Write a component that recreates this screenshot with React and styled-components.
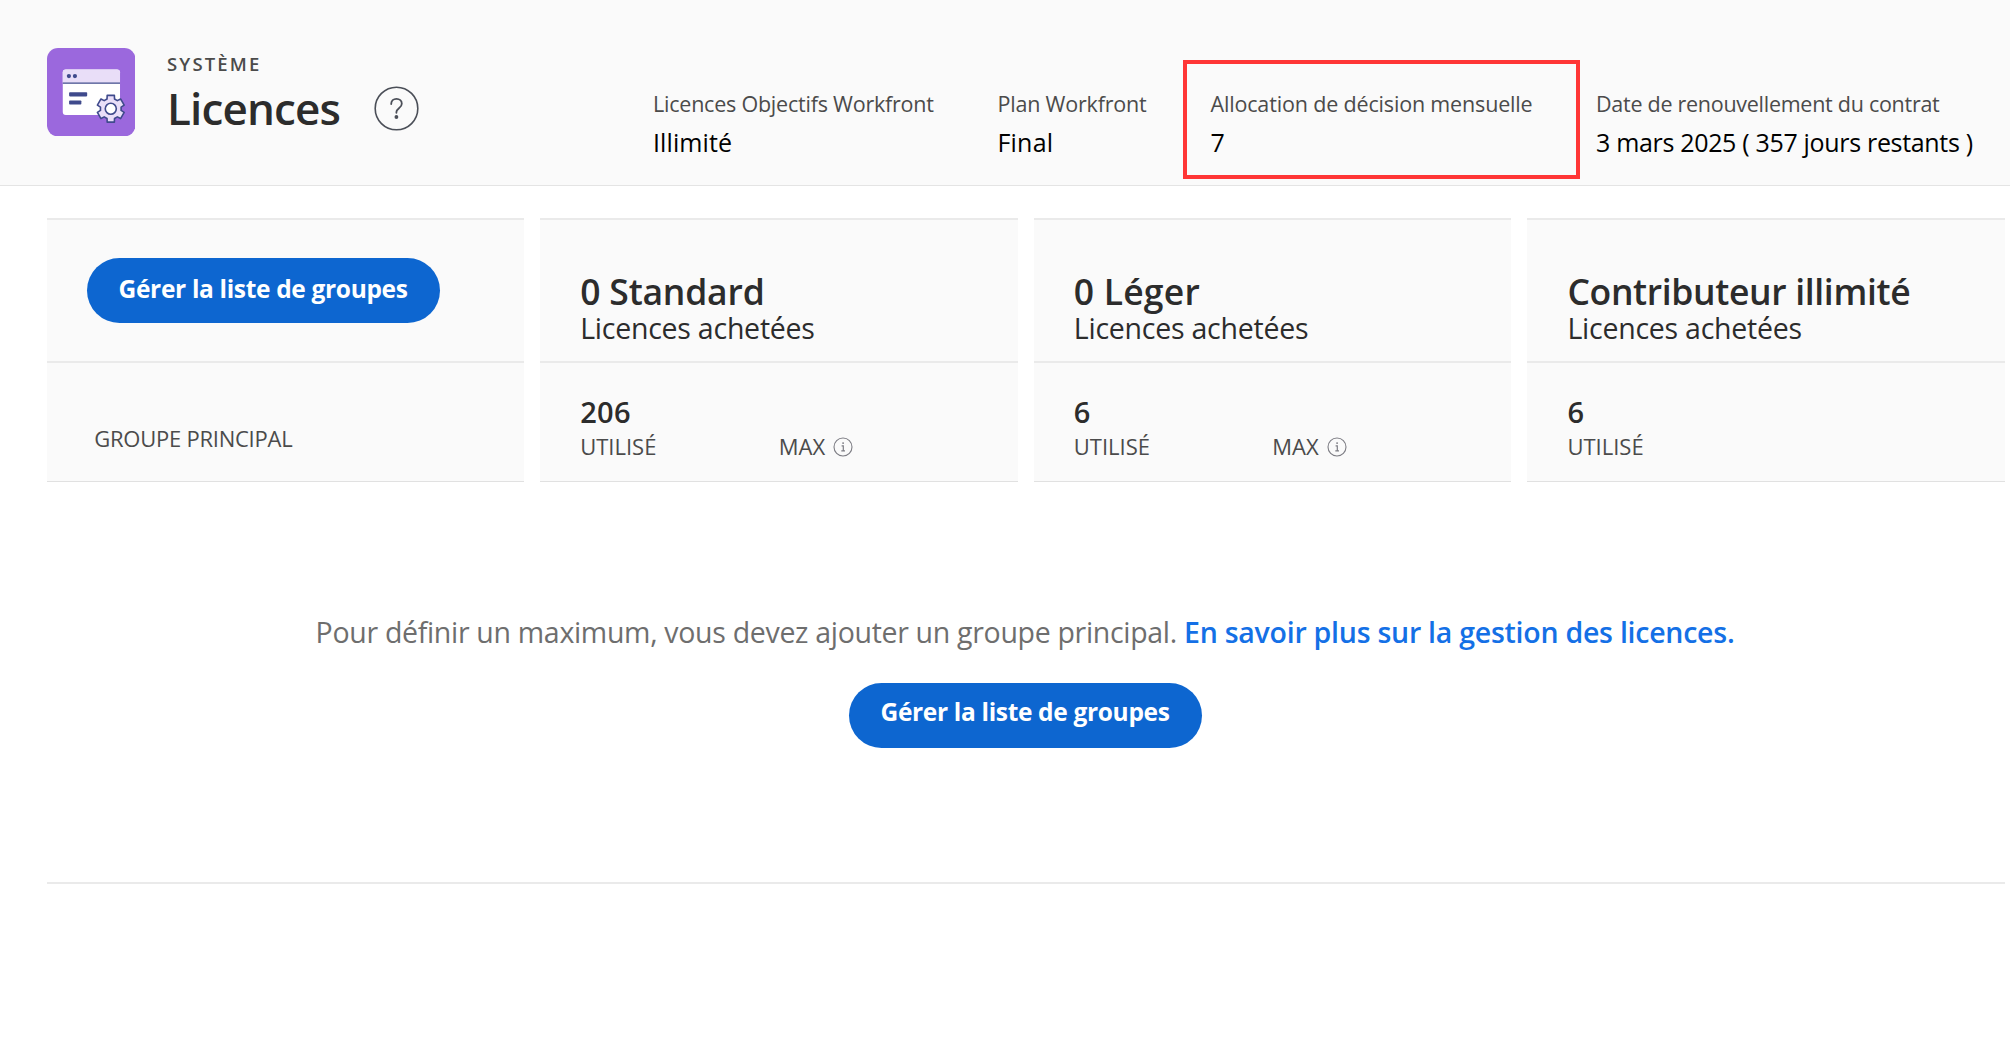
import React from 'react';
import styled, { createGlobalStyle } from 'styled-components';

const GlobalStyle = createGlobalStyle`
  *, *::before, *::after { box-sizing: border-box; }
  html, body { margin: 0; background: #fff; }
  body { font-family: "Open Sans", "Noto Sans", sans-serif; color: #2c2c2c; overflow: hidden; }
`;

const Page = styled.main`
  width: 2010px;
  height: 1062px;
  background: #fff;
`;

const Header = styled.header`
  display: flex;
  height: 186px;
  padding: 48px 0 0 46.6px;
  background: #fafafa;
  border-bottom: 1px solid #e4e4e4;
`;

const Identity = styled.div`
  display: flex;
  gap: 32px;
  width: 606.4px;
`;

const TitleBlock = styled.div`
  padding-top: 5px;
`;

const Eyebrow = styled.div`
  font-size: 18.5px;
  font-weight: 600;
  line-height: 22px;
  letter-spacing: 2.15px;
  color: #4b4b4b;
`;

const TitleRow = styled.div`
  display: flex;
  align-items: center;
  gap: 33px;
  margin-top: 8px;
`;

const Title = styled.h1`
  margin: 0;
  width: 174.4px;
  font-size: 44px;
  font-weight: 600;
  line-height: 50px;
  letter-spacing: -0.85px;
  white-space: nowrap;
  color: #2c2c2c;
`;

const Facts = styled.dl`
  display: grid;
  grid-template-columns: 344.5px 213px 385.5px 1fr;
  margin: 0;
  padding-top: 41px;
`;

const Fact = styled.div`
  position: relative;
  white-space: nowrap;
`;

const FactLabel = styled.dt`
  font-size: 21.5px;
  line-height: 30px;
  letter-spacing: ${(p) => p.$tracking}px;
  color: #4b4b4b;
`;

const FactValue = styled.dd`
  margin: 5px 0 0;
  font-size: 25px;
  line-height: 36px;
  letter-spacing: ${(p) => p.$tracking}px;
  color: #000;
`;

const Highlight = styled.span`
  position: absolute;
  left: -27.5px;
  top: -29px;
  width: 397px;
  height: 119px;
  border: 4px solid #ff3636;
`;

const Content = styled.section`
  padding: 32px 5px 0 46.6px;
`;

const Cards = styled.div`
  display: grid;
  grid-template-columns: repeat(4, 1fr);
  column-gap: 16px;
`;

const Card = styled.article`
  height: 264px;
  background: #fafafa;
  border-top: 2px solid #eaeaea;
  border-bottom: 1px solid #e1e1e1;
`;

const CardTop = styled.div`
  height: 143px;
  padding: ${(p) => (p.$action ? '38px 0 0 40px' : '51px 0 0 40px')};
  border-bottom: 2px solid #eaeaea;
`;

const CardBottom = styled.div`
  display: flex;
  height: 118px;
  padding: 31px 0 0 40px;
`;

const CardTitle = styled.h2`
  margin: 0;
  font-size: 35.5px;
  font-weight: 600;
  line-height: 40px;
  letter-spacing: ${(p) => p.$tracking}px;
  color: #2c2c2c;
`;

const CardSubtitle = styled.div`
  font-size: 28.5px;
  line-height: 34px;
  letter-spacing: -0.24px;
  color: #2c2c2c;
`;

const Metric = styled.div`
  width: 198.5px;
`;

const MetricValue = styled.div`
  height: 36px;
  margin-bottom: 2px;
  font-size: 29px;
  font-weight: 600;
  line-height: 36px;
  letter-spacing: 0.3px;
`;

const MetricLabel = styled.div`
  display: flex;
  align-items: center;
  gap: 8px;
  font-size: 22px;
  line-height: 28px;
  letter-spacing: 0;
  color: #4b4b4b;

  svg {
    margin-top: 2px;
  }
`;

const GroupLabel = styled.div`
  padding: 30px 0 0 7.6px;
  font-size: 22px;
  line-height: 28px;
  letter-spacing: -0.24px;
  color: #4b4b4b;
`;

const PillButton = styled.button`
  display: flex;
  align-items: center;
  justify-content: center;
  width: 353px;
  height: 64.5px;
  padding: 0 0 ${(p) => (p.$raised ? 7 : 4)}px;
  border: 0;
  border-radius: 33px;
  background: #0d66d0;
  color: #fff;
  font-family: inherit;
  font-size: 24.5px;
  font-weight: 700;
  letter-spacing: -0.33px;
  white-space: nowrap;
`;

const EmptyState = styled.div`
  display: flex;
  flex-direction: column;
  align-items: center;
  gap: 33px;
  height: 402px;
  padding: 132px 1.5px 0 0;
  border-bottom: 2px solid #eaeaea;
`;

const Message = styled.p`
  margin: 0;
  font-size: 28.5px;
  line-height: 36px;
  letter-spacing: -0.31px;
  white-space: nowrap;
  color: #6e6e6e;
`;

const LearnMore = styled.a`
  font-weight: 600;
  letter-spacing: -0.25px;
  color: #1470e6;
`;

const gearPath = (() => {
  const points = [];
  for (let i = 0; i < 6; i += 1) {
    const base = i * 60 - 90;
    [[-21, 10.4], [-15, 13.8], [15, 13.8], [21, 10.4]].forEach(([offset, radius]) => {
      const a = ((base + offset) * Math.PI) / 180;
      points.push(`${(63.5 + radius * Math.cos(a)).toFixed(2)} ${(60.5 + radius * Math.sin(a)).toFixed(2)}`);
    });
  }
  return `M${points.join('L')}Z`;
})();

function SystemLogo() {
  return (
    <svg width="88.4" height="88.4" viewBox="0 0 88 88">
      <rect width="88" height="88" rx="11" fill="#9b68dd" />
      <rect x="15.7" y="21.5" width="57" height="45.3" rx="3" fill="#fff" />
      <path d="M15.7 34.5V24.5a3 3 0 0 1 3-3h51a3 3 0 0 1 3 3v10Z" fill="#e9def8" />
      <path d="M15.7 35h57" stroke="#3f4a8c" strokeWidth="1.3" />
      <circle cx="21.8" cy="28" r="2.1" fill="#3f4a8c" />
      <circle cx="27.8" cy="28" r="2.1" fill="#3f4a8c" />
      <rect x="22" y="44" width="18" height="4.2" rx="0.8" fill="#3f4a8c" />
      <rect x="22" y="52.2" width="12.2" height="4" rx="0.8" fill="#3f4a8c" />
      <path d={gearPath} fill="#e9def8" stroke="#3f4a8c" strokeWidth="1.6" strokeLinejoin="round" />
      <circle cx="63.5" cy="60.5" r="5.5" fill="#fff" stroke="#3f4a8c" strokeWidth="1.6" />
    </svg>
  );
}

function HelpIcon() {
  return (
    <svg width="45" height="45" viewBox="0 0 45 45" fill="none">
      <circle cx="22.5" cy="22.5" r="21.3" stroke="#4b4f58" strokeWidth="1.6" />
      <path d="M17.2 18c0-3.1 2.2-5.2 5.3-5.2s5.3 2 5.3 4.9c0 4.4-5.4 4.6-5.4 8.4v.7" stroke="#4b4f58" strokeWidth="1.8" strokeLinecap="round" />
      <circle cx="22.4" cy="31" r="1.9" fill="#4b4f58" />
    </svg>
  );
}

function InfoIcon() {
  return (
    <svg width="20" height="20" viewBox="0 0 20 20" fill="none">
      <circle cx="10" cy="10" r="9" stroke="#7d7d84" strokeWidth="1.1" />
      <path d="M8.6 8.9H10.3V13.6M8.3 13.9H12" stroke="#7d7d84" strokeWidth="1.2" />
      <circle cx="10.1" cy="6.1" r="0.95" fill="#7d7d84" />
    </svg>
  );
}

const facts = [
  { label: 'Licences Objectifs Workfront', value: 'Illimité', labelTracking: -0.22, valueTracking: 0.1 },
  { label: 'Plan Workfront', value: 'Final', labelTracking: -0.2, valueTracking: 0.2 },
  { label: 'Allocation de décision mensuelle', value: '7', labelTracking: -0.16, valueTracking: 0, highlighted: true },
  { label: 'Date de renouvellement du contrat', value: '3 mars 2025 ( 357 jours restants )', labelTracking: -0.27, valueTracking: -0.32 },
];

const licences = [
  { title: '0 Standard', used: '206', max: true, tracking: -0.2 },
  { title: '0 Léger', used: '6', max: true, tracking: 0.2 },
  { title: 'Contributeur illimité', used: '6', max: false, tracking: -0.34 },
];

export default function App() {
  return (
    <Page>
      <GlobalStyle />
      <Header>
        <Identity>
          <SystemLogo />
          <TitleBlock>
            <Eyebrow>SYSTÈME</Eyebrow>
            <TitleRow>
              <Title>Licences</Title>
              <HelpIcon />
            </TitleRow>
          </TitleBlock>
        </Identity>
        <Facts>
          {facts.map((fact) => (
            <Fact key={fact.label}>
              <FactLabel $tracking={fact.labelTracking}>{fact.label}</FactLabel>
              <FactValue $tracking={fact.valueTracking}>{fact.value}</FactValue>
              {fact.highlighted && <Highlight />}
            </Fact>
          ))}
        </Facts>
      </Header>
      <Content>
        <Cards>
          <Card>
            <CardTop $action>
              <PillButton>Gérer la liste de groupes</PillButton>
            </CardTop>
            <CardBottom>
              <GroupLabel>GROUPE PRINCIPAL</GroupLabel>
            </CardBottom>
          </Card>
          {licences.map((licence) => (
            <Card key={licence.title}>
              <CardTop>
                <CardTitle $tracking={licence.tracking}>{licence.title}</CardTitle>
                <CardSubtitle>Licences achetées</CardSubtitle>
              </CardTop>
              <CardBottom>
                <Metric>
                  <MetricValue>{licence.used}</MetricValue>
                  <MetricLabel>UTILISÉ</MetricLabel>
                </Metric>
                {licence.max && (
                  <Metric>
                    <MetricValue />
                    <MetricLabel>
                      MAX
                      <InfoIcon />
                    </MetricLabel>
                  </Metric>
                )}
              </CardBottom>
            </Card>
          ))}
        </Cards>
        <EmptyState>
          <Message>
            Pour définir un maximum, vous devez ajouter un groupe principal.{' '}
            <LearnMore>En savoir plus sur la gestion des licences.</LearnMore>
          </Message>
          <PillButton $raised>Gérer la liste de groupes</PillButton>
        </EmptyState>
      </Content>
    </Page>
  );
}
